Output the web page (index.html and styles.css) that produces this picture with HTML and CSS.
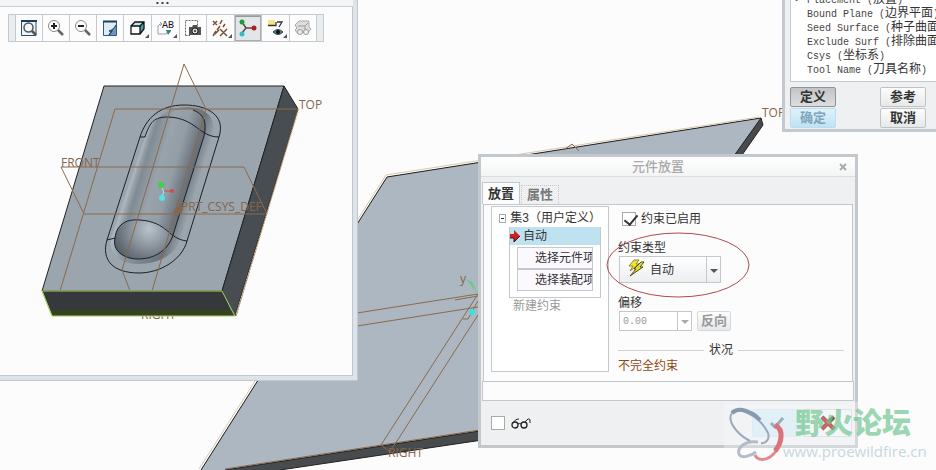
FILE: index.html
```html
<!DOCTYPE html>
<html lang="zh-CN">
<head>
  <meta charset="UTF-8">
  <meta name="viewport" content="width=device-width, initial-scale=1.0">
  <title>元件放置</title>
  <link rel="stylesheet" href="styles.css">
</head>
<body>
  <div class="desktop">
    <!-- assembly in the main graphics area -->
    <svg class="scene" width="936" height="470" viewBox="0 0 936 470">
      <path d="M387 177L761 118L763 125L550 430L280 470H201Z" fill="#484b4e"/>
      <path d="M387 177L761 118L545 421L225 470H201Z" fill="#adb7c1"/>
      <path d="M201 470L387 177L761 118L545 421L225 470" fill="none" stroke="#222"/>
      <path d="M199 469L386 175L759 117" fill="none" stroke="#d9c8ae"/>
      <path d="M761 118L763 125L550 430L280 470" fill="none" stroke="#222"/>
      <path d="M225 469L545 420" fill="none" stroke="#8a6a4c"/>
      <g class="datum">
        <path d="M357 313L478 294M357 326L478 307M478 294L381 445M478 315L397 441M455 300L478 296M463 319H468L478 301"/>
        <path d="M381 445L390 452M397 441L389 452M564 150L572 144L579 151"/>
      </g>
      <path d="M466 279L472 282L478 294Z" fill="#63cf7c"/>
      <circle cx="472" cy="312" r="3" fill="#35e3e3"/>
      <text class="cad-label" x="460" y="283">y</text>
      <text class="cad-label" x="388" y="457">RIGHT</text>
      <text class="cad-label" x="762" y="117">TOP</text>
    </svg>

    <section class="part-window">
      <div class="grip">• • •</div>
      <div class="toolbar">
        <button aria-label="重新调整"><svg width="18" height="18" viewBox="0 0 18 18"><path d="M1.500 2V16.500H16V2" fill="#eef4f8" stroke="#24506e"/><path d="M1 2H17" stroke="#173f61" stroke-width="2"/><circle cx="8.500" cy="8.500" r="4.500" fill="#f5f8fa" stroke="#555" stroke-width="1.500"/><path d="M12 12L16 16" stroke="#555" stroke-width="2.500"/></svg></button>
        <button aria-label="放大"><svg width="18" height="18" viewBox="0 0 18 18"><circle cx="7" cy="7" r="5.500" fill="#fff" stroke="#888"/><path d="M4 7H10M7 4V10" stroke="#222" stroke-width="2"/><path d="M11 11L16 16" stroke="#6b625b" stroke-width="2.500"/></svg></button>
        <button aria-label="缩小"><svg width="18" height="18" viewBox="0 0 18 18"><circle cx="7" cy="7" r="5.500" fill="#fff" stroke="#888"/><path d="M4 7H10" stroke="#222" stroke-width="2"/><path d="M11 11L16 16" stroke="#6b625b" stroke-width="2.500"/></svg></button>
        <button aria-label="重画"><svg width="18" height="18" viewBox="0 0 18 18"><path d="M2.500 2V16.500H15.500V2" fill="#dfecf6" stroke="#2d5a83"/><path d="M2 2.500H16" stroke="#173f61" stroke-width="2"/><path d="M15 8L8 16H15Z" fill="#6d95c0"/><path d="M15 6Q13 11 8 12L11 12L8 16" fill="none" stroke="#24496f" stroke-width="1.300"/></svg></button>
        <button class="has-menu" aria-label="显示样式"><svg width="18" height="18" viewBox="0 0 18 18"><path d="M2 7L6 3H15L11 7Z" fill="#b9e9ec"/><path d="M11 7L15 3V10L11 15Z" fill="#4aa0a8"/><path d="M2 7H11V15H2Z" fill="#fff"/><path d="M2 7H11V15H2ZM2 7L6 3H15V10L11 15M11 7L15 3" fill="none" stroke="#111" stroke-width="1.300"/></svg></button>
        <button class="has-menu" aria-label="已命名视图"><svg width="20" height="18" viewBox="0 0 20 18"><path d="M5 5H4L2 7V15H10L13 11M4 3L6 5L4 7" fill="none" stroke="#8aa4ac"/><path d="M10 11H15V12L12 16Z" fill="#388080"/><text class="icon-text" x="6" y="9">AB</text></svg></button>
        <button aria-label="视图管理器"><svg width="18" height="18" viewBox="0 0 18 18"><path d="M1.500 16.500V1.500H13.500V7M1.500 16.500H6" fill="none" stroke="#666" stroke-dasharray="2 1"/><path d="M5 8H8L9 6H13L14 8H17V16H5Z" fill="#55524e"/><circle cx="11" cy="12" r="3" fill="#ddd" stroke="#222"/><circle cx="11" cy="12" r="1" fill="#222"/></svg></button>
        <button class="has-menu" aria-label="基准显示"><svg width="20" height="18" viewBox="0 0 20 18"><path d="M2 2L6 6M6 2L2 6M9 10L16 17M16 10L9 17M11 1L9 5M9 7L6 11M5 12L2 17M14 5L12 8M8 11L4 15" stroke="#7b5136" stroke-width="1.500"/></svg></button>
        <button class="pressed" aria-label="旋转中心" aria-pressed="true"><svg width="20" height="20" viewBox="0 0 20 20"><path d="M4 4L8 10L4 15M8 10H16" fill="none" stroke="#5b4b40" stroke-width="1.500"/><circle cx="4" cy="4" r="2.500" fill="#1e9a3c"/><circle cx="4" cy="16" r="2.500" fill="#39b8c9"/><circle cx="16" cy="10" r="2.500" fill="#a81f24"/></svg></button>
        <button class="has-menu" aria-label="注释显示"><svg width="20" height="18" viewBox="0 0 20 18"><path d="M2 1H9V6H2Z" fill="#f3e783"/><path d="M2 6.500H10V3M11 3H16L13 8" fill="none" stroke="#333" stroke-width="1.300"/><path d="M7 13Q12 8 17 13Q12 18 7 13Z" fill="#557f80" stroke="#27454a"/><circle cx="12" cy="13" r="2" fill="#111"/></svg></button>
        <button aria-label="预览" disabled><svg width="20" height="18" viewBox="0 0 20 18"><path d="M2 6L6 2H16V8L18 10L14 15L10 13L5 15L2 11L4 9Z" fill="#dedede" stroke="#aaa"/><path d="M5 7H12L15 4M12 7V11" fill="none" stroke="#999"/><circle cx="7" cy="13" r="2.500" fill="#eee" stroke="#999"/><circle cx="13" cy="13" r="2.500" fill="#eee" stroke="#999"/></svg></button>
      </div>
      <svg class="part" width="352" height="334" viewBox="0 42 352 334">
        <defs>
          <linearGradient id="body" gradientUnits="userSpaceOnUse" x1="126" y1="175" x2="196" y2="196">
            <stop offset="0" stop-color="#929ca4"/>
            <stop offset="0.100" stop-color="#a5afb7"/>
            <stop offset="0.200" stop-color="#818b93"/>
            <stop offset="0.400" stop-color="#98a3ab"/>
            <stop offset="0.600" stop-color="#939da5"/>
            <stop offset="0.800" stop-color="#6c757d"/>
            <stop offset="1" stop-color="#59626a"/>
          </linearGradient>
          <linearGradient id="groove" gradientUnits="userSpaceOnUse" x1="120" y1="180" x2="205" y2="206">
            <stop offset="0" stop-color="#9aa5ad"/>
            <stop offset="0.120" stop-color="#abb5bd"/>
            <stop offset="0.300" stop-color="#8b959d"/>
            <stop offset="0.700" stop-color="#6a737b"/>
            <stop offset="0.880" stop-color="#a3adb5"/>
            <stop offset="1" stop-color="#9aa5ad"/>
          </linearGradient>
          <radialGradient id="dome" gradientUnits="userSpaceOnUse" cx="149" cy="229" r="38">
            <stop offset="0" stop-color="#b9c3cb"/>
            <stop offset="0.400" stop-color="#929ca4"/>
            <stop offset="1" stop-color="#555d65"/>
          </radialGradient>
        </defs>
        <text class="cad-label" x="141" y="319">RIGHT</text>
        <path d="M104 86H284L222 291H42Z" fill="#9aa5ad" stroke="#222"/>
        <path d="M284 86L298 109L235 316L222 291Z" fill="#484d52" stroke="#222"/>
        <path d="M42 291H222L234 316H52Z" fill="#36393c"/>
        <path d="M50 310L52 315H234L231 310Z" fill="#35441f"/>
        <path d="M140 137C146 118 160 105 184 105C207 105 226 115 219 137L187 241C182 260 160 273 139 273C113 273 101 260 107 240Z" fill="#9aa5ad"/>
        <path d="M146 135C152 118 165 108 186 107C206 107 218 118 212 137L181 238C176 255 158 264 138 264C118 264 108 251 111 238Z" fill="url(#groove)"/>
        <path d="M148 135C153 118 165 110 186 109C204 109 209 121 204 136L173 235C168 250 158 259 138 259C120 259 112 249 115 237Z" fill="url(#body)"/>
        <path d="M115 237C117 223 128 219 140 220C155 221 163 226 173 234C168 250 156 259 138 259C122 259 112 250 115 237Z" fill="url(#dome)"/>
        <path d="M140 137C146 118 160 105 184 105C207 105 226 115 219 137L187 241C182 260 160 273 139 273C113 273 101 260 107 240Z" fill="none" stroke="#1c2024"/>
        <path d="M140 137H145C150 122 154 117 168 117C196 118 199 137 219 137M193 110C204 114 207 122 204 136L173 235M107 240L115 238C117 222 129 219 140 220C168 222 168 239 187 241M115 238C112 250 123 259 138 259C160 259 170 245 173 235" fill="none" stroke="#1c2024"/>
        <g class="datum">
          <path d="M298 109H115L60 291M298 109L236 316M61 167H244L267 214H84ZM206 109L184 64L122 270L130 291M206 109L152 291"/>
        </g>
        <path d="M299 109L236 315" stroke="#d9c8ae" stroke-dasharray="2 1"/>
        <path d="M42 291H222L235 316H52ZM42 291L52 316" fill="none" stroke="#a6d45b"/>
        <path d="M176 208L182 203V213H173Z" fill="#85664c"/>
        <path d="M162 188L164 192L162 196" fill="none" stroke="#a9eef0"/>
        <path d="M164 191H174" stroke="#d84848"/>
        <circle cx="161" cy="185" r="3" fill="#3bd24a"/>
        <circle cx="172" cy="191" r="2" fill="#d84848"/>
        <circle cx="162" cy="198" r="3" fill="#55dfe8"/>
        <text class="cad-label" x="299" y="109">TOP</text>
        <text class="cad-label" x="61" y="167">FRONT</text>
        <text class="cad-label" x="181" y="211">PRT_CSYS_DEF</text>
      </svg>
    </section>

    <section class="feature-window">
      <ul class="elements">
        <li class="current">Placement (<span>放置</span>)</li>
        <li>Bound Plane (<span>边界平面</span>)</li>
        <li>Seed Surface (<span>种子曲面</span>)</li>
        <li>Exclude Surf (<span>排除曲面</span>)</li>
        <li>Csys (<span>坐标系</span>)</li>
        <li>Tool Name (<span>刀具名称</span>)</li>
      </ul>
      <div class="feature-actions">
        <button class="btn btn-down">定义</button>
        <button class="btn">参考</button>
        <button class="btn btn-default" disabled>确定</button>
        <button class="btn">取消</button>
      </div>
    </section>

    <section class="dialog">
      <header class="dialog-title">
        <h1>元件放置</h1>
        <button class="close" aria-label="关闭"><svg width="8" height="8" viewBox="0 0 8 8"><path d="M1 1L7 7M7 1L1 7" stroke="#aaa" stroke-width="2"/></svg></button>
      </header>
      <nav class="tabs">
        <button class="tab active">放置</button>
        <button class="tab">属性</button>
      </nav>
      <div class="panel">
        <div class="tree">
          <div class="tree-root"><span class="toggle"></span>集3（用户定义）</div>
          <div class="tree-set">
            <div class="tree-selected"><svg width="11" height="12" viewBox="0 0 11 12"><path d="M0 4H4V0L10 6L4 12V8H0Z" fill="#cf1d24"/><path d="M0 8H4V12L10 6" fill="none" stroke="#4a1010"/></svg>自动</div>
            <div class="refs">
              <div class="ref">选择元件项</div>
              <div class="ref">选择装配项</div>
            </div>
          </div>
          <div class="tree-new">新建约束</div>
        </div>
        <div class="form">
          <label class="check"><input type="checkbox" checked>约束已启用</label>
          <label class="type-label" for="type">约束类型</label>
          <div class="combo combo-type">
            <svg class="bolt" width="18" height="18" viewBox="0 0 18 18"><path d="M7 1H12L9 5H12L3 12L6 7H2Z" fill="#f0e636" stroke="#8d8630"/><path d="M14 3L17 3L13 8H16L3 17L9 10H7Z" fill="#e6dc28" stroke="#4d4a20"/></svg>
            <select id="type"><option>自动</option></select>
          </div>
          <label class="offset-label" for="offset">偏移</label>
          <div class="offset-row">
            <div class="combo combo-offset"><select id="offset" disabled><option>0.00</option></select></div>
            <button class="btn btn-flip" disabled>反向</button>
          </div>
          <div class="status-head">状况</div>
          <div class="status">不完全约束</div>
        </div>
      </div>
      <div class="message"></div>
      <footer class="dialog-foot">
        <label class="preview"><input type="checkbox" aria-label="预览"><svg width="21" height="13" viewBox="0 0 21 13"><circle cx="4" cy="8" r="3" fill="none" stroke="#222" stroke-width="1.300"/><circle cx="13" cy="8" r="3" fill="none" stroke="#222" stroke-width="1.300"/><path d="M7 7Q8 6 10 7M2 6Q5 1 8 2M14 5Q18 0 19 3V6" fill="none" stroke="#222"/></svg></label>
        <div class="foot-actions">
          <button class="ok" aria-label="确定"><svg width="18" height="14" viewBox="0 0 18 14"><path d="M3 7L7 11L15 2" fill="none" stroke="#7488a0" stroke-width="3"/></svg></button>
          <button class="cancel" aria-label="取消"><svg width="18" height="16" viewBox="0 0 18 16"><path d="M3 2L15 14M15 2L3 14" stroke="#3a1a14" stroke-width="4"/><path d="M3 2L14 13M11 6L3 14" stroke="#c92328" stroke-width="3"/></svg></button>
        </div>
      </footer>
    </section>

    <svg class="mark-ring" width="144" height="66" viewBox="0 0 144 66"><ellipse cx="72" cy="33" rx="71" ry="32" fill="none" stroke="#b04a50"/></svg>

    <div class="watermark">
      <svg width="58" height="58" viewBox="0 0 58 58">
        <path d="M31 36C18 34 10 42 12 48C14 53 24 50 29 46" fill="none" stroke="#b3bcc8" stroke-width="3"/>
        <path d="M23 35C8 27 0 14 5 7C12 0 33 10 41 27C43 33 39 38 34 37" fill="none" stroke="#9aaabd" stroke-width="2"/>
        <path d="M5 7C12 0 26 6 33 14" fill="none" stroke="#8699b0" stroke-width="4"/>
        <path d="M48 19C59 25 54 43 43 51C37 55 30 54 28 49" fill="none" stroke="#e28a8f" stroke-width="3"/>
        <path d="M48 19C58 24 54 38 48 45" fill="none" stroke="#dc7279" stroke-width="5"/>
      </svg>
      <div class="watermark-text">
        <div class="watermark-name">野火论坛</div>
        <div class="watermark-url">www.proewildfire.cn</div>
      </div>
    </div>
  </div>
</body>
</html>
```

FILE: styles.css
```css
* { box-sizing: border-box; }
body { margin: 0; background: #fcfcfc; color: #333; font: 12px/16px "Liberation Sans", "Noto Sans CJK SC", sans-serif; }
button, select, input { margin: 0; font: inherit; color: inherit; }
.desktop { position: relative; min-height: 100vh; overflow: hidden; white-space: nowrap; }
.scene { position: absolute; left: 0; top: 0; }
.cad-label { font: 12px "Open Sans", sans-serif; fill: #85664c; }
.datum path { fill: none; stroke: #8a6a4c; }
.icon-text { font: 10px "Liberation Mono", monospace; fill: #111; }

/* part window */
.part-window { position: absolute; left: 0; top: 0; width: 357px; background: #fcfcfc; border: solid #dde3e8; border-width: 0 4px 4px 0; box-shadow: inset -1px -1px #c0c7cd, 0 0 0 1px #c0c7cd; }
.grip { height: 7px; background: #f4f5f6; border-bottom: 1px solid #c9cdd1; text-align: center; font-size: 8px; line-height: 6px; padding-right: 28px; }
.toolbar { display: flex; width: max-content; margin: 7px 0 0 8px; height: 28px; border: 1px solid #c4c9ce; border-width: 1px 0; background: #fff; }
.toolbar::before, .toolbar::after { content: ""; width: 6px; background: #e9edf0; border: 1px solid #c4c9ce; border-width: 0 1px; }
.toolbar::after { border-left: 0; }
.toolbar button { position: relative; display: flex; align-items: center; justify-content: center; width: 27px; padding: 0; border: 0; border-right: 1px solid #c4c9ce; background: #fcfcfc; }
.toolbar .has-menu { width: 28px; }
.toolbar .has-menu::after { content: ""; position: absolute; right: 2px; bottom: 3px; border: 2px solid #555; border-top-color: transparent; border-left-color: transparent; }
.toolbar .pressed { background: #e3e6e9; box-shadow: inset 0 0 0 1px #a9adb1, inset 0 2px #999; }
.part { display: block; }

/* feature window */
.feature-window { position: absolute; left: 782px; top: -12px; width: 176px; padding: 0 5px; background: #eef0f2; border: 3px solid #c3c9cf; }
.elements { list-style: none; margin: 0; padding: 1px 0 4px 16px; background: #fff; border: 1px solid #c3c9cf; color: #444; font: 10px/14px "Liberation Mono", "Noto Sans CJK SC", monospace; }
.elements li { position: relative; height: 14px; }
.elements span { font-size: 12px; color: #333; }
.elements .current::before { content: ">"; position: absolute; left: -12px; }
.feature-actions { display: grid; grid-template-columns: 46px 46px; column-gap: 44px; row-gap: 1px; padding: 5px 0 1px; }
.btn { height: 20px; padding: 0; border: 1px solid #c0c3c6; border-radius: 2px; background: linear-gradient(#fdfdfd, #e6e8ea); color: #333; font-weight: bold; font-size: 13px; line-height: 18px; }
.btn-down { border-color: #909396; background: linear-gradient(#c2c4c6, #dcdee0); }
.btn-default { border-color: #bddcec; background: linear-gradient(#e0f2fb, #bfe2f3); color: #7fa5bb; }

/* placement dialog */
.dialog { position: absolute; left: 478px; top: 154px; width: 380px; background: #eef0f2; border: 3px solid #c3c8cd; }
.dialog-title { position: relative; display: flex; align-items: center; height: 20px; background: linear-gradient(#fff, #f3f4f5); border-bottom: 1px solid #dcdfe1; }
.dialog-title h1 { flex: 1; margin: 0; padding-right: 20px; text-align: center; font-size: 13px; line-height: 19px; font-weight: 500; color: #aaa; }
.close { position: absolute; right: 8px; top: 6px; display: flex; padding: 0; border: 0; background: none; }
.tabs { display: flex; align-items: flex-end; gap: 1px; height: 27px; padding: 0 1px; }
.tab { height: 19px; width: 38px; padding: 0; border: 1px dotted #c3c8cd; border-bottom: 0; background: #eef0f2; color: #777; font-weight: bold; font-size: 13px; line-height: 18px; }
.tab.active { height: 22px; border: 1px solid #c3c8cd; border-bottom: 0; background: #fcfcfc; color: #333; }
.panel { display: flex; gap: 7px; margin: 0 2px; padding: 1px 8px 7px 7px; background: #fcfcfc; border: 1px solid #c3c8cd; border-bottom: 0; }
.tree { width: 118px; height: 166px; padding: 2px 7px; border: 1px solid #c3c8cd; background: #fff; }
.tree-root { display: flex; align-items: center; height: 18px; }
.toggle { position: relative; width: 9px; height: 9px; margin-right: 4px; border: 1px solid #aaa; }
.toggle::after { content: ""; position: absolute; left: 1px; right: 1px; top: 3px; height: 1px; background: #333; }
.tree-set { margin-left: 10px; border: 1px solid #c3c8cd; border-top: 0; }
.tree-selected { display: flex; align-items: center; gap: 2px; height: 18px; background: #bfe2f0; }
.refs { padding: 2px 7px 6px; }
.ref { height: 22px; padding-left: 17px; line-height: 20px; overflow: hidden; border: 1px solid #c3c8cd; background: #fbf8fe; }
.tree-new { margin-left: 14px; color: #999; }
.form { flex: 1; display: flex; flex-direction: column; align-items: flex-start; padding-left: 2px; }
.check { display: flex; align-items: center; gap: 5px; height: 20px; margin: 3px 0 0 4px; }
input[type="checkbox"] { appearance: none; position: relative; width: 14px; height: 14px; border: 1px solid #aaa; background: #fff; }
input[type="checkbox"]:checked::after { content: ""; position: absolute; left: 4px; top: -1px; width: 6px; height: 11px; border: solid #333; border-width: 0 2px 2px 0; transform: rotate(40deg); }
.type-label { margin-top: 11px; }
.combo { position: relative; display: flex; margin-left: 1px; }
.combo select { appearance: none; width: 100%; border: 1px solid #c3c8cd; border-radius: 0; background: linear-gradient(#fff, #eceef0); }
.combo::after { content: ""; position: absolute; right: 3px; top: 50%; margin-top: -1px; border: 4px solid transparent; border-top-color: #555; border-bottom: 0; pointer-events: none; }
.combo::before { content: ""; position: absolute; right: 14px; top: 1px; bottom: 1px; width: 1px; background: #c3c8cd; }
.combo-type { width: 102px; }
.combo-type select { height: 27px; padding: 0 0 0 30px; }
.bolt { position: absolute; left: 8px; top: 3px; }
.offset-label { margin-top: 12px; }
.offset-row { display: flex; gap: 5px; }
.combo-offset { width: 73px; }
.combo-offset select { height: 20px; padding: 0 0 0 3px; background: #fff; color: #999; opacity: 1; font: 10px "Liberation Mono", monospace; }
.combo-offset::after { border-top-color: #aaa; }
.btn-flip { width: 34px; border-color: #d7dadc; color: #999; }
.status-head { display: flex; align-items: center; gap: 5px; align-self: stretch; margin-top: 11px; }
.status-head::before, .status-head::after { content: ""; height: 1px; background: #cfd2d5; }
.status-head::before { width: 86px; }
.status-head::after { flex: 1; }
.status { color: #8c4a12; }
.message { height: 20px; margin: 0 1px; border: 1px solid #c3c8cd; background: #fcfcfc; }
.dialog-foot { display: flex; align-items: center; justify-content: space-between; height: 44px; padding: 0 3px 0 10px; }
.preview { display: flex; align-items: center; gap: 6px; }
.foot-actions { display: flex; gap: 2px; }
.ok, .cancel { display: flex; align-items: center; justify-content: center; width: 49px; height: 28px; padding: 0; border: 1px solid #d3e5ef; border-radius: 2px; background: #d6eaf5; }
.cancel { border-color: #d5d8da; background: #f3f4f5; }

/* hand-drawn ring around the constraint type */
.mark-ring { position: absolute; left: 606px; top: 232px; pointer-events: none; }

.watermark { position: absolute; left: 724px; top: 402px; display: flex; width: 212px; height: 66px; padding: 4px 0 0 3px; background: rgba(252, 252, 252, 0.300); pointer-events: none; }
.watermark-text { margin-left: 10px; }
.watermark-name { height: 35px; font: 900 29px/30px "Noto Sans CJK SC", sans-serif; color: rgba(110, 198, 145, 0.700); }
.watermark-url { margin-left: -12px; font: 15px/20px "Open Sans", sans-serif; color: #c5d8dc; }
```
